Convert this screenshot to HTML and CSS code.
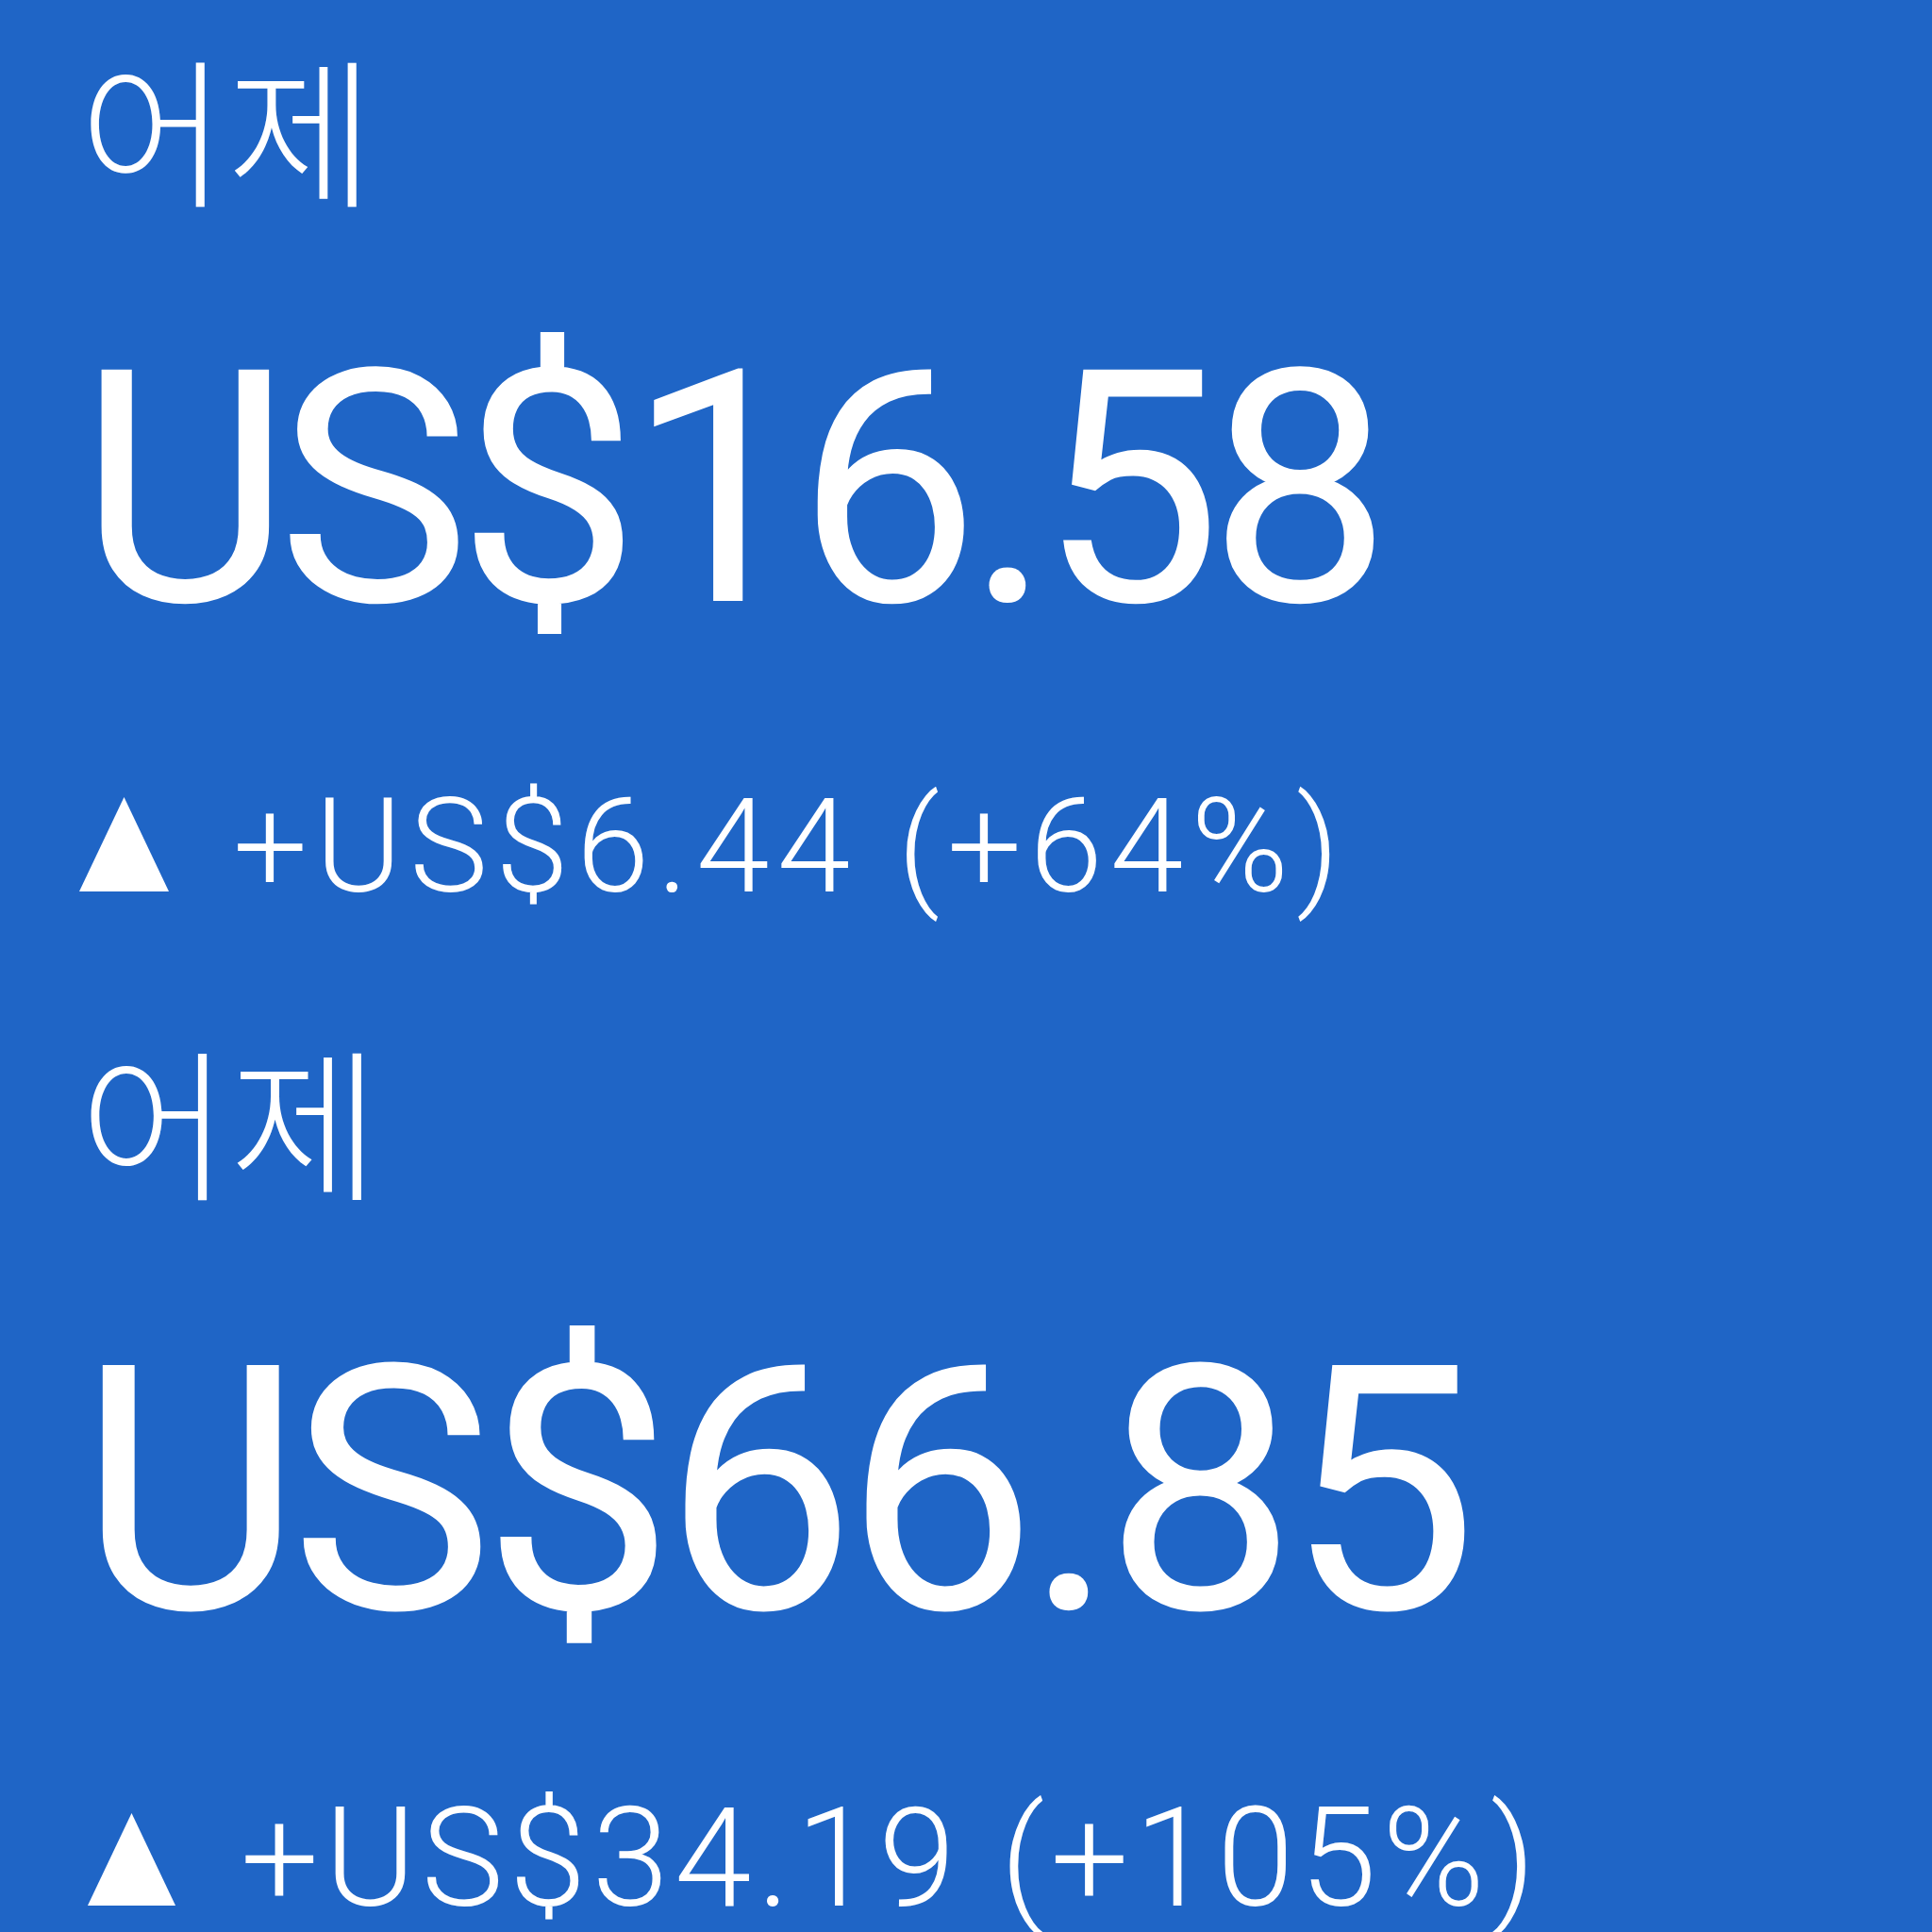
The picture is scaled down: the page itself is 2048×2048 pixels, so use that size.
FILE: index.html
```html
<!DOCTYPE html>
<html lang="ko">
<head>
  <meta charset="UTF-8" />
  <title>어제 수익</title>
  <link rel="stylesheet" href="styles.css">
</head>
<body>
  <div class="card card-top">
    <div class="label">어제</div>
    <div class="amount">US$16.58</div>
    <div class="change">
      <svg class="arrow" viewBox="0 0 95 100"><polygon points="47.5,0 95,100 0,100" fill="#fff"/></svg>
      <span>+US$6.44 (+64%)</span>
    </div>
  </div>

  <div class="card card-bottom">
    <div class="label">어제</div>
    <div class="amount">US$66.85</div>
    <div class="change">
      <svg class="arrow" viewBox="0 0 95 100"><polygon points="47.5,0 95,100 0,100" fill="#fff"/></svg>
      <span>+US$34.19 (+105%)</span>
    </div>
  </div>
</body>
</html>
```

FILE: styles.css
```css
html, body {
  margin: 0;
  padding: 0;
  height: 2048px;
  overflow: hidden;
  background: #1f65c6;
}

body {
  font-family: Roboto, "Noto Sans CJK KR", sans-serif;
  color: #fff;
}

.card {
  padding-left: 84px;
  box-sizing: border-box;
  overflow: hidden;
}

.card-top {
  height: 1022px;
  padding-top: 48px;
}

.card-bottom {
  height: 1026px;
  padding-top: 75px;
}

.label {
  font-family: "Noto Sans CJK KR", sans-serif;
  font-weight: 300;
  font-size: 170px;
  line-height: 1;
}

.amount {
  font-size: 345px;
  line-height: 1;
  letter-spacing: -14px;
  margin-top: 129px;
}

.change {
  display: flex;
  align-items: flex-end;
  gap: 68px;
  font-size: 140px;
  font-weight: 300;
  letter-spacing: 8px;
  line-height: 1;
  margin-top: 135px;
}

.change .arrow {
  width: 95px;
  height: 100px;
  margin-bottom: 22px;
  flex-shrink: 0;
}

/* the second card is shown a little larger */
.card-bottom .label {
  font-size: 173px;
}

.card-bottom .amount {
  font-size: 363px;
  letter-spacing: -12px;
  margin-top: 130px;
}

.card-bottom .change {
  font-size: 147px;
  letter-spacing: 6px;
  gap: 66px;
  margin-top: 134px;
}

.card-bottom .arrow {
  width: 99px;
  height: 98px;
  margin-left: 6px;
  margin-bottom: 24px;
}
```
